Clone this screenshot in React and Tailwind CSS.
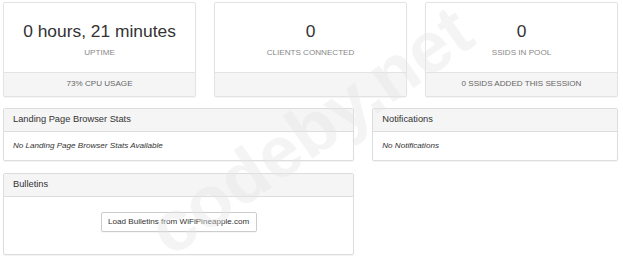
const font = { fontFamily: '"Liberation Sans", Arial, sans-serif' }

function StatCard({ value, label, footer }) {
  return (
    <div className="col-span-4 rounded-[2px] border border-[#e3e3e3] bg-white shadow-[0_1px_1px_rgba(0,0,0,0.05)]">
      <div className="flex h-[69px] flex-col items-center pt-[19px]">
        <div className="text-[17.4px] leading-[19px] text-[#333]">{value}</div>
        <div className="mt-[6px] text-[8.1px] leading-[11px] text-[#888]">{label}</div>
      </div>
      <div className="flex h-[24px] items-center justify-center border-t border-[#e3e3e3] bg-[#f5f5f5] text-[8.1px] text-[#666]">
        {footer}
      </div>
    </div>
  )
}

function Panel({ title, className = '', children }) {
  return (
    <div className={`rounded-[2px] border border-[#dddddd] bg-white shadow-[0_1px_1px_rgba(0,0,0,0.05)] ${className}`}>
      <div className="flex h-[23px] items-center border-b border-[#dddddd] bg-[#f5f5f5] px-[9px] text-[9.3px] text-[#333]">
        {title}
      </div>
      {children}
    </div>
  )
}

export default function App() {
  return (
    <div className="relative h-[258px] w-[623px] overflow-hidden bg-white" style={font}>
      <div className="grid w-[618px] grid-cols-12 gap-x-[18px] pl-[3px] pt-[2px]">
        <StatCard value="0 hours, 21 minutes" label="UPTIME" footer="73% CPU USAGE" />
        <StatCard value="0" label="CLIENTS CONNECTED" footer="" />
        <StatCard value="0" label="SSIDS IN POOL" footer="0 SSIDS ADDED THIS SESSION" />

        <div className="col-span-7 mt-[11px] flex flex-col gap-[12px]">
          <Panel title="Landing Page Browser Stats">
            <div className="flex h-[28px] items-center px-[9px] text-[8.1px] italic text-[#333]">
              No Landing Page Browser Stats Available
            </div>
          </Panel>
          <Panel title="Bulletins">
            <div className="flex h-[57px] justify-center pt-[15px]">
              <button
                type="button"
                className="h-[20px] w-[156px] rounded-[2px] border border-[#cccccc] bg-white text-[8.1px] text-[#333] shadow-[0_1px_1px_rgba(0,0,0,0.04)]"
              >
                Load Bulletins from WiFiPineapple.com
              </button>
            </div>
          </Panel>
        </div>

        <div className="col-span-5 mt-[11px]">
          <Panel title="Notifications">
            <div className="flex h-[28px] items-center px-[9px] text-[8.1px] italic text-[#333]">
              No Notifications
            </div>
          </Panel>
        </div>
      </div>

      {/* watermark */}
      <div className="pointer-events-none absolute left-[310px] top-[130px] -translate-x-1/2 -translate-y-1/2 -rotate-[35deg] whitespace-nowrap text-[72px] font-bold leading-none text-[#e6e6e6] opacity-40">
        codeby.net
      </div>
    </div>
  )
}
